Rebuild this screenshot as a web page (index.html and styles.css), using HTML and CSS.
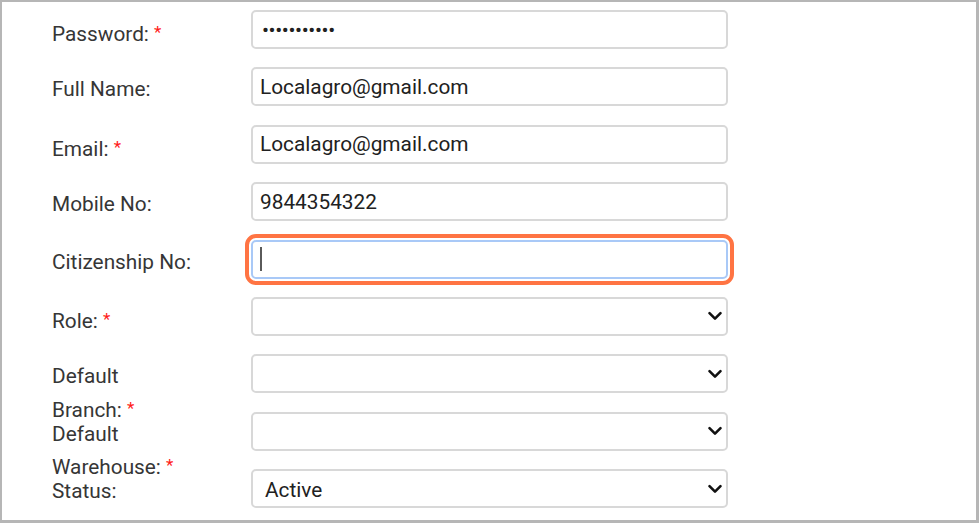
FILE: index.html
```html
<!DOCTYPE html>
<html lang="en">
<head>
<meta charset="utf-8">
<title>User Form</title>
<link rel="stylesheet" href="styles.css">
</head>
<body>
<div class="frame">
  <form class="form">
    <label class="label">Password: <span class="req">*</span></label>
    <div class="field"><input class="control" type="password" value="xxxxxxxxxxx"></div>

    <label class="label">Full Name:</label>
    <div class="field"><input class="control" type="text" value="Localagro@gmail.com"></div>

    <label class="label">Email: <span class="req">*</span></label>
    <div class="field"><input class="control" type="text" value="Localagro@gmail.com"></div>

    <label class="label">Mobile No:</label>
    <div class="field"><input class="control" type="text" value="9844354322"></div>

    <label class="label">Citizenship No:</label>
    <div class="field"><input class="control focused" type="text" value=""><span class="caret"></span></div>

    <label class="label">Role: <span class="req">*</span></label>
    <div class="field"><select class="control select"><option></option></select><svg class="chev" width="16" height="12" viewBox="0 0 16 12"><path d="M2.5 3.2 8 8.7 13.5 3.2" fill="none" stroke="#111" stroke-width="2.6" stroke-linecap="round" stroke-linejoin="round"/></svg></div>

    <label class="label">Default Branch: <span class="req">*</span></label>
    <div class="field"><select class="control select"><option></option></select><svg class="chev" width="16" height="12" viewBox="0 0 16 12"><path d="M2.5 3.2 8 8.7 13.5 3.2" fill="none" stroke="#111" stroke-width="2.6" stroke-linecap="round" stroke-linejoin="round"/></svg></div>

    <label class="label">Default Warehouse: <span class="req">*</span></label>
    <div class="field"><select class="control select"><option></option></select><svg class="chev" width="16" height="12" viewBox="0 0 16 12"><path d="M2.5 3.2 8 8.7 13.5 3.2" fill="none" stroke="#111" stroke-width="2.6" stroke-linecap="round" stroke-linejoin="round"/></svg></div>

    <label class="label">Status:</label>
    <div class="field"><select class="control select"><option>Active</option></select><svg class="chev" width="16" height="12" viewBox="0 0 16 12"><path d="M2.5 3.2 8 8.7 13.5 3.2" fill="none" stroke="#111" stroke-width="2.6" stroke-linecap="round" stroke-linejoin="round"/></svg></div>
  </form>
</div>
</body>
</html>
```

FILE: styles.css
```css
html, body {
  margin: 0;
  padding: 0;
  background: #ffffff;
}

.frame {
  box-sizing: border-box;
  width: 979px;
  height: 523px;
  border-top: 2px solid #b6b6b6;
  border-left: 2px solid #b6b6b6;
  border-right: 3px solid #b6b6b6;
  border-bottom: 3px solid #b6b6b6;
  overflow: hidden;
  font-family: Roboto, "Liberation Sans", Arial, sans-serif;
}

.form {
  display: grid;
  grid-template-columns: 139px 477px;
  grid-auto-rows: 39px;
  column-gap: 60px;
  row-gap: 18.4px;
  padding: 8px 0 0 50px;
  margin: 0;
}

.label {
  font-size: 20.8px;
  line-height: 31.2px;
  color: #363636;
  padding-top: 7px;
  box-sizing: border-box;
  height: 39px;
  overflow: visible;
}

.req {
  color: #ff1a1a;
  font-size: 17px;
  vertical-align: 3px;
}

.field {
  position: relative;
}

.control {
  box-sizing: border-box;
  display: block;
  width: 100%;
  height: 39px;
  margin: 0;
  padding: 0 8px 0 7px;
  border: 2px solid #d8d8d8;
  border-radius: 5px;
  background: #ffffff;
  font-family: Roboto, "Liberation Sans", Arial, sans-serif;
  font-size: 20.8px;
  color: #212121;
  outline: none;
}

.control[type="password"] {
  padding-left: 9px;
  letter-spacing: -0.4px;
}

.focused {
  border-color: #a9c9f7;
  outline: 4px solid #ff7443;
  outline-offset: 2px;
}

.caret {
  position: absolute;
  left: 9px;
  top: 7px;
  width: 2px;
  height: 24px;
  background: #5a5a5a;
}

.select {
  appearance: none;
  -webkit-appearance: none;
  padding: 3px 30px 0 12px;
}

.chev {
  position: absolute;
  right: 5px;
  top: 50%;
  margin-top: -6px;
  pointer-events: none;
}
```
